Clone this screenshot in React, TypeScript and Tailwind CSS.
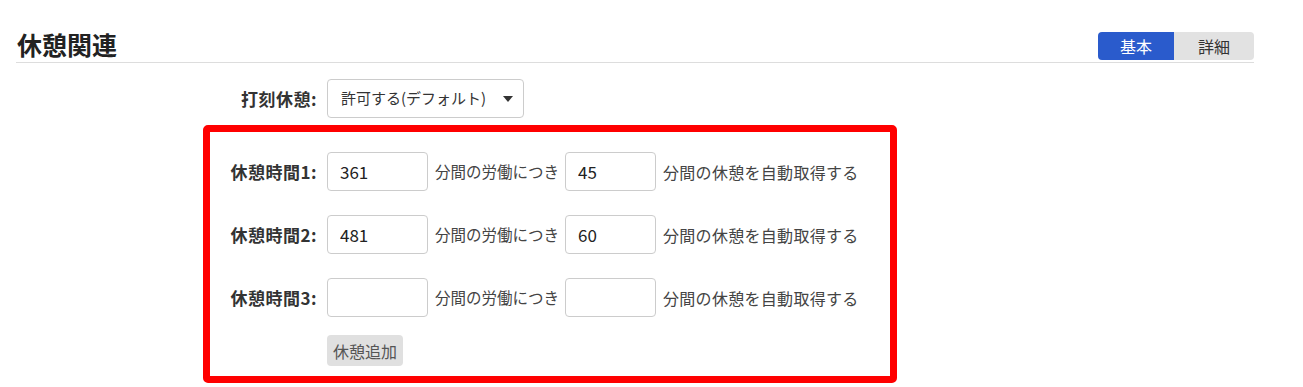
const font = { fontFamily: '"Noto Sans CJK JP", "Noto Sans", sans-serif' };

const breaks = [
  { label: "休憩時間1:", work: "361", rest: "45" },
  { label: "休憩時間2:", work: "481", rest: "60" },
  { label: "休憩時間3:", work: "", rest: "" },
];

export default function App() {
  return (
    <div className="bg-white w-[1303px] h-[387px] overflow-hidden text-[#333] font-['Noto_Sans_CJK_JP',sans-serif]">
      <div className="pl-[16px] w-[1254px]">
        {/* Header */}
        <div className="flex items-end justify-between pt-[28px] pb-[2px] border-b border-[#dddddd]">
          <h2 className="text-[25px] leading-[32px] font-bold text-[#222] pl-[1px]">休憩関連</h2>
          <div className="flex h-[28px] rounded-[4px] overflow-hidden text-[16px] leading-[28px]">
            <button className="w-[76px] bg-[#2a5bcc] text-white">基本</button>
            <button className="w-[80px] bg-[#e2e2e2] text-[#333]">詳細</button>
          </div>
        </div>

        {/* 打刻休憩 */}
        <div className="flex items-center mt-[16px] ml-[196px] gap-[10px]">
          <span className="w-[105px] text-right text-[17px] tracking-[0.5px] font-bold">打刻休憩:</span>
          <div className="w-[197px] h-[39px] border border-[#cccccc] rounded-[4px] flex items-center justify-between pl-[13px] pr-[10px] text-[15px]">
            <span>許可する(デフォルト)</span>
            <svg width="10" height="6" viewBox="0 0 10 6">
              <path d="M0 0h10L5 6z" fill="#333" />
            </svg>
          </div>
        </div>

        {/* Break times */}
        <div className="mt-[7px] ml-[187px] w-[694px] border-[7px] border-[#ff0000] rounded-[5px] pt-[20px] pb-[10px] flex flex-col gap-[24px]">
          {breaks.map((b) => (
            <div key={b.label} className="flex items-center text-[16px]" style={font}>
              <span className="w-[107px] text-right text-[17px] tracking-[0.5px] font-bold">{b.label}</span>
              <input
                readOnly
                value={b.work}
                className="ml-[10px] w-[101px] h-[39px] border border-[#cccccc] rounded-[4px] pl-[12px] text-[17px] text-[#222] outline-none"
              />
              <span className="ml-[7px] text-[15.5px] text-[#444]">分間の労働につき</span>
              <input
                readOnly
                value={b.rest}
                className="ml-[6px] w-[91px] h-[39px] border border-[#cccccc] rounded-[4px] pl-[12px] text-[17px] text-[#222] outline-none"
              />
              <span className="ml-[7px] tracking-[0.3px] text-[#444]">分間の休憩を自動取得する</span>
            </div>
          ))}
          <div className="-mt-[6px] pl-[117px]">
            <button className="h-[31px] px-[6px] bg-[#e0e0e0] rounded-[4px] text-[16px] text-[#555]">休憩追加</button>
          </div>
        </div>
      </div>
    </div>
  );
}
